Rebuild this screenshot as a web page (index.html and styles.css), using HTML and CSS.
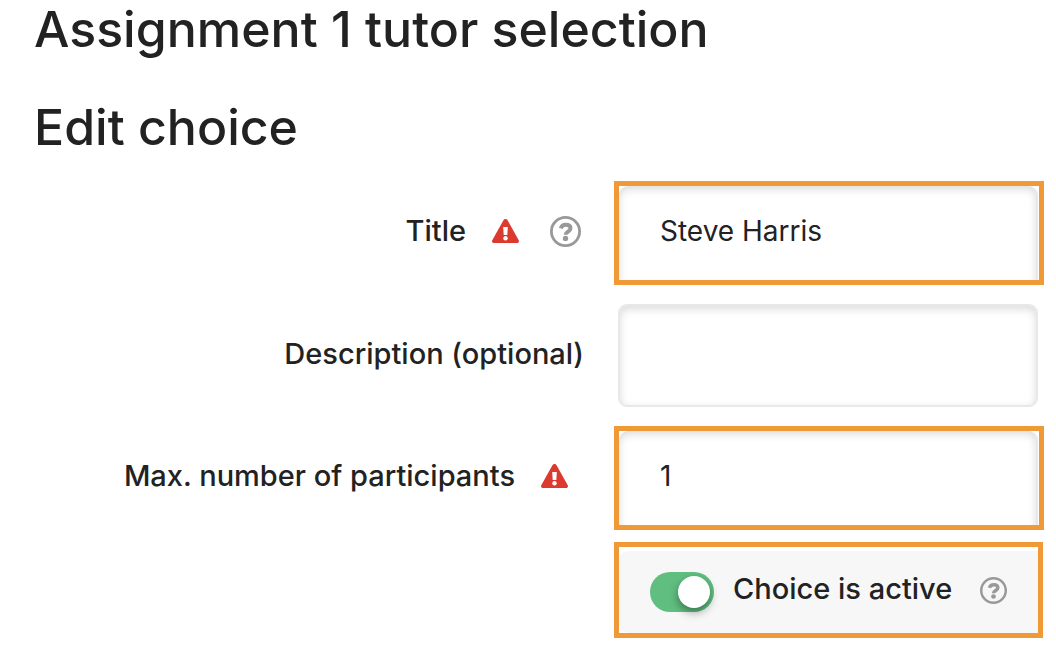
FILE: index.html
```
<!DOCTYPE html>
<html lang="en">
<head>
    <meta charset="UTF-8">
    <title>Edit choice</title>
    <link rel="stylesheet" href="styles.css">
</head>
<body>
<svg class="symbols" aria-hidden="true">
    <symbol id="warning" viewBox="0 0 27 24">
        <path fill="#dc3a2f" d="M11.3 1.4a2.5 2.5 0 0 1 4.4 0L26.6 21c.9 1.5 0 3-1.8 3H2.2C.4 24-.5 22.5.4 21z"/>
        <path fill="#fff" d="M11.2 8h4.600l-.5 8h-3.600z"/>
        <circle fill="#fff" cx="13.500" cy="19.200" r="2.200"/>
    </symbol>
    <symbol id="help" viewBox="0 0 31 31">
        <circle cx="15.500" cy="15.500" r="14.100" fill="none" stroke="#999" stroke-width="2.800"/>
        <path d="M10.800 12.400C11.600 9.800 13.200 8.800 15.800 8.800c2.800 0 4.700 1.300 4.700 3.500 0 3.300-4.900 3.200-4.900 6.500" fill="none" stroke="#999" stroke-width="4"/>
        <circle cx="15.500" cy="22.400" r="2.700" fill="#999"/>
    </symbol>
</svg>

<main class="container">
    <h1>Assignment 1 tutor selection</h1>
    <h2>Edit choice</h2>

    <form action="#" method="post">
        <div class="row">
            <div class="label">
                <label for="title">Title</label>
                <svg class="warning" role="img" aria-label="Required"><use href="#warning"/></svg>
                <button type="button" class="help" aria-label="Help with Title"><svg><use href="#help"/></svg></button>
            </div>
            <div class="field highlight">
                <input type="text" name="title" id="title" value="Steve Harris">
            </div>
        </div>

        <div class="row">
            <div class="label">
                <label for="description">Description (optional)</label>
            </div>
            <div class="field plain">
                <input type="text" name="description" id="description">
            </div>
        </div>

        <div class="row last-input">
            <div class="label">
                <label for="max">Max. number of participants</label>
                <svg class="warning no-help" role="img" aria-label="Required"><use href="#warning"/></svg>
            </div>
            <div class="field highlight">
                <input type="text" name="max" id="max" value="1">
            </div>
        </div>

        <div class="row">
            <div class="field highlight active">
                <div class="panel">
                    <input type="checkbox" name="active" id="active" class="switch" checked>
                    <label for="active">Choice is active</label>
                    <button type="button" class="help small" aria-label="Help with Choice is active"><svg><use href="#help"/></svg></button>
                </div>
            </div>
        </div>
    </form>
</main>
</body>
</html>
```
FILE: styles.css
```
* {
    box-sizing: border-box;
}

body {
    margin: 0;
    background: #fff;
    color: #222;
    font-family: Inter, "Liberation Sans", sans-serif;
    font-size: 28px;
    line-height: 40px;
}

.symbols {
    display: none;
}

.container {
    padding: 0 12px 0 34px;
}

h1, h2 {
    margin: 0;
    font-size: 50px;
    font-weight: 500;
    line-height: 58px;
}

h1 {
    margin-bottom: 40px;
}

h2 {
    margin-bottom: 25px;
}

.row {
    display: grid;
    grid-template-columns: minmax(0, 55fr) minmax(0, 43fr);
    column-gap: 30px;
    margin-bottom: 19px;
}

.last-input {
    margin-bottom: 12px;
}

.label {
    display: flex;
    align-items: center;
    justify-content: flex-end;
    padding-bottom: 4px;
}

label {
    font-size: 29px;
    font-weight: 500;
}

.field {
    grid-column: 2;
}

.warning {
    width: 27px;
    height: 24px;
    margin-left: 26px;
}

.no-help {
    margin-right: 16px;
}

.help {
    width: 31px;
    height: 31px;
    margin: 0 3px 0 31px;
    padding: 0;
    border: none;
    background: none;
    cursor: pointer;
}

.help svg {
    display: block;
    width: 100%;
    height: 100%;
}

.highlight {
    height: 104px;
    padding-right: 1px;
    border: 5px solid #f09a37;
    overflow: hidden;
}

.plain {
    padding: 0 6px 0 4px;
}

input[type=text] {
    display: block;
    width: 100%;
    height: 103px;
    padding: 0 40px 14px 41px;
    border: 0 solid #e8e8e8;
    border-right-width: 2px;
    border-radius: 9px;
    background: #fff;
    box-shadow: inset 0 3px 8px rgba(0, 0, 0, 0.15);
    color: #222;
    font: inherit;
    outline: none;
}

.plain input[type=text] {
    border-width: 2px;
}

.active {
    height: 96px;
    padding: 4px 0 0;
    margin-right: 1px;
}

.panel {
    display: flex;
    align-items: center;
    height: 82px;
    padding-left: 31px;
    border-radius: 9px 0 0 9px;
    background: #f7f7f7;
}

.panel label {
    padding-bottom: 6px;
}

.panel .small {
    width: 27px;
    height: 27px;
    margin: 0 31px 4px auto;
}

.switch {
    appearance: none;
    flex: none;
    width: 64px;
    height: 40px;
    margin: 0 19px 0 0;
    padding: 4px;
    border-radius: 20px;
    background: #60bf80;
    cursor: pointer;
}

.switch::before {
    content: "";
    display: block;
    width: 32px;
    height: 32px;
    border-radius: 50%;
    background: #fff;
    box-shadow: 0 4px 10px rgba(0, 0, 0, 0.4);
}

.switch:checked::before {
    margin-left: auto;
}
```
